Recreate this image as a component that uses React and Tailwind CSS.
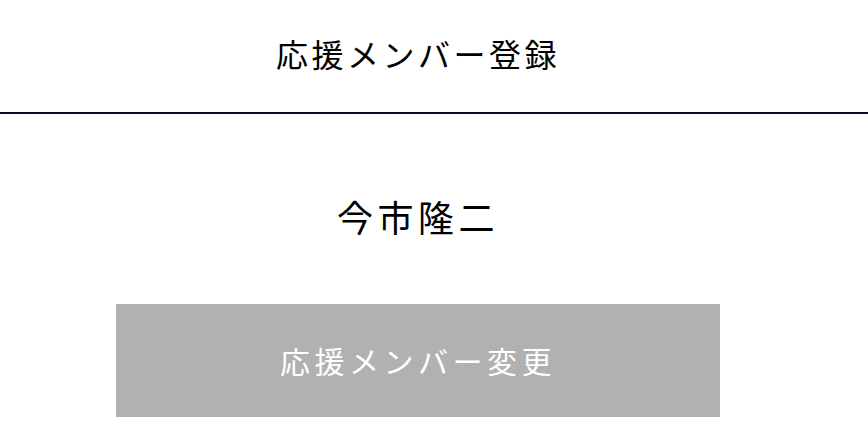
import React from "react";

const font = { fontFamily: '"Noto Sans CJK JP", "Noto Sans", sans-serif' };

const App = () => {
  return (
    <div className="min-h-screen bg-white text-black" style={font}>
      {/* ヘッダー */}
      <header className="h-[114px] pb-[6px] border-b-2 border-[#070b26] flex items-center justify-center pr-[32px]">
        <h1 className="text-[32px] leading-none tracking-[3.5px] font-normal">
          応援メンバー登録
        </h1>
      </header>

      <main className="flex flex-col items-center pr-[32px]">
        <p className="mt-[84px] text-[36px] leading-none tracking-[4.5px]">
          今市隆二
        </p>
        <button
          type="button"
          className="mt-[70px] w-[604px] h-[113px] bg-[#b1b1b1] text-white text-[30px] tracking-[4.5px] flex items-center justify-center"
        >
          応援メンバー変更
        </button>
      </main>
    </div>
  );
};

export default App;
